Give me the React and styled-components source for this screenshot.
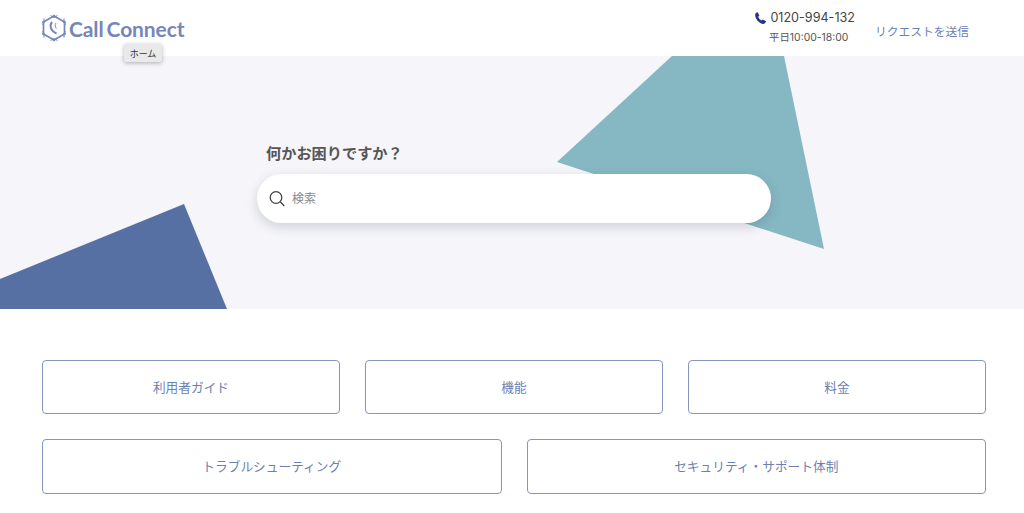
import styled, { createGlobalStyle } from 'styled-components'

const jp = `Inter, "Noto Sans CJK JP", sans-serif`

const GlobalStyle = createGlobalStyle`
html, body {
  margin:0;
  padding:0;
  height:100%;
  overflow:hidden;
  background:#fff;
  font-family:${jp};
}
* { box-sizing:border-box; }
`
const Header = styled.header`
position:relative;
z-index:2;
height:56px;
padding:0 55px 0 42px;
display:flex;
align-items:flex-start;
justify-content:space-between;
background:#fff;
`
const LogoLink = styled.a`
position:relative;
display:flex;
align-items:center;
gap:2px;
margin-top:13px;
height:30px;
`
const LogoText = styled.span`
font-family:Lato, sans-serif;
font-weight:700;
font-size:21px;
word-spacing:-2px;
letter-spacing:-0.1px;
color:#7686ba;
`
const Tooltip = styled.span`
position:absolute;
left:82px;
top:31px;
width:38px;
height:18px;
display:flex;
align-items:center;
justify-content:center;
background:#e9e9e9;
border-radius:2px;
box-shadow:0 1px 4px rgba(0,0,0,.3);
font-size:9px;
color:#333;
`
const HeaderRight = styled.div`
display:flex;
align-items:flex-start;
gap:20px;
`
const Contact = styled.div`
display:flex;
flex-direction:column;
align-items:center;
padding-top:9px;
`
const Phone = styled.div`
display:flex;
align-items:center;
gap:3px;
height:17px;
font-size:12.6px;
color:#444;
`
const Hours = styled.div`
margin:5px 0 0 8px;
font-size:10.4px;
line-height:14px;
color:#555;
`
const RequestLink = styled.a`
margin-top:24px;
font-size:11.75px;
line-height:17px;
color:#6a7fb5;
`
const Hero = styled.section`
position:relative;
height:253px;
overflow:hidden;
background:#f5f5fa;
`
const Shape = styled.svg`
position:absolute;
left:0;
top:0;
width:1024px;
height:253px;
`
const HeroInner = styled.div`
position:relative;
width:514px;
margin-left:257px;
padding-top:87px;
`
const HeroTitle = styled.h2`
margin:0 0 9px 9px;
font-size:15.2px;
line-height:22px;
font-weight:700;
color:#555;
`
const SearchBox = styled.div`
height:49px;
padding:0 12px;
display:flex;
align-items:center;
gap:5px;
background:#fff;
border-radius:25px;
box-shadow:0 4px 12px rgba(60,60,90,.2);
`
const SearchInput = styled.input`
flex:1;
border:none;
outline:none;
background:transparent;
font-family:${jp};
font-size:12px;
color:#444;
&::placeholder { color:#8a8a8a; opacity:1; }
`
const Links = styled.main`
padding:51px 38px 0 42px;
display:flex;
flex-direction:column;
gap:25px;
`
const LinkRow = styled.div`
display:flex;
gap:25px;
`
const LinkCard = styled.a`
flex:1;
height:${p => p.$tall ? 55 : 54}px;
padding-bottom:2px;
display:flex;
align-items:center;
justify-content:center;
border:1px solid #8496bf;
border-radius:4px;
font-size:12.7px;
color:#6c7fb0;
`

function LogoMark() {
  const nodes = [[12, 2], [22.5, 8], [22.5, 20], [12, 26], [1.5, 20], [1.5, 8]]
  return (
    <svg width="25" height="28" viewBox="0 0 25 28" fill="none" stroke="#7686ba">
      <path d="M12 2 22.500 8v12L12 26 1.500 20V8z" strokeWidth="1.700" />
      <path d="M8.500 1.500 12 3.500 15.500 1.500M22 4.500V9l2 1.500M22 23.500V19l2-1.500M8.500 26.500 12 24.500l3.500 2M2 4.500V9L0 10.500M2 23.500V19L0 17.500" strokeWidth="1" />
      {nodes.map(([x, y], i) => <circle key={i} cx={x} cy={y} r="1.300" fill="#7686ba" stroke="none" />)}
      <path d="M10 8c-2.500 3-2 8.500 4.500 11.500" strokeWidth="2" />
      <path d="M14 9c-1.500 2-1 4 .5 5.500" strokeWidth="1" />
    </svg>
  )
}

function PhoneIcon() {
  return (
    <svg width="13" height="14" viewBox="0 0 24 24" fill="#27348b">
      <path d="M6.600 1.500 10 7.200 7.800 9.600c.9 2.700 3.300 5.600 6 7l2.500-2 6 3.600c-.6 2.500-2.700 4.800-5.100 4.800C9.500 22.500 1.500 13 2.200 5.500c.2-2 2.200-3.800 4.400-4z" />
    </svg>
  )
}

function SearchIcon() {
  return (
    <svg width="16" height="17" viewBox="0 0 16 17" fill="none" stroke="#444" strokeWidth="1.300">
      <circle cx="7" cy="7.500" r="5.800" />
      <path d="M11.200 11.700 15.300 16" />
    </svg>
  )
}

export default function App() {
  return (
    <>
      <GlobalStyle />
      <Header>
        <LogoLink>
          <LogoMark />
          <LogoText>Call Connect</LogoText>
          <Tooltip>ホーム</Tooltip>
        </LogoLink>
        <HeaderRight>
          <Contact>
            <Phone><PhoneIcon />0120-994-132</Phone>
            <Hours>平日10:00-18:00</Hours>
          </Contact>
          <RequestLink>リクエストを送信</RequestLink>
        </HeaderRight>
      </Header>
      <Hero>
        <Shape viewBox="0 0 1024 253">
          <polygon points="672,0 784,0 824,193 557,106" fill="#85b8c2" />
          <polygon points="0,223 184,148 227,253 0,253" fill="#5770a3" />
        </Shape>
        <HeroInner>
          <HeroTitle>何かお困りですか？</HeroTitle>
          <SearchBox>
            <SearchIcon />
            <SearchInput placeholder="検索" />
          </SearchBox>
        </HeroInner>
      </Hero>
      <Links>
        <LinkRow>
          <LinkCard>利用者ガイド</LinkCard>
          <LinkCard>機能</LinkCard>
          <LinkCard>料金</LinkCard>
        </LinkRow>
        <LinkRow>
          <LinkCard $tall>トラブルシューティング</LinkCard>
          <LinkCard $tall>セキュリティ・サポート体制</LinkCard>
        </LinkRow>
      </Links>
    </>
  )
}
